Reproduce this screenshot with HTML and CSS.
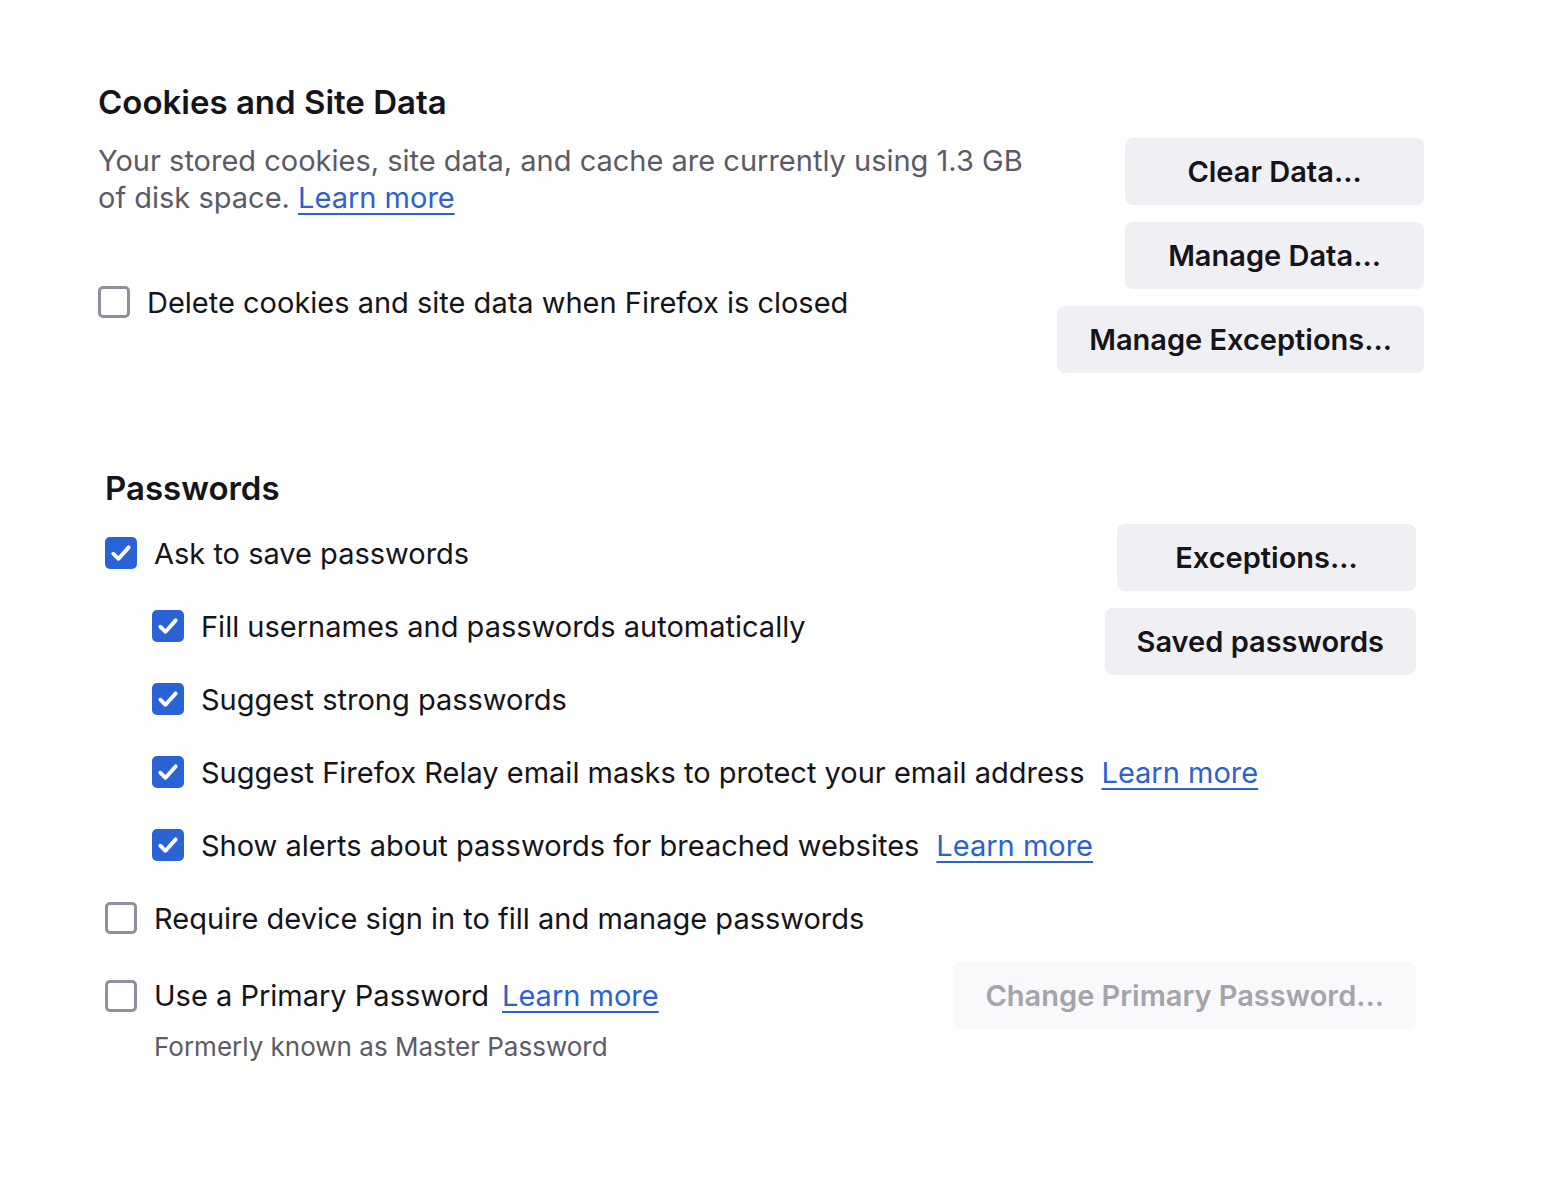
FILE: index.html
```html
<!DOCTYPE html>
<html lang="en">
<head>
<meta charset="utf-8">
<title>Privacy settings</title>
<link rel="stylesheet" href="styles.css">
</head>
<body>
<main class="page">
  <section class="cookies">
    <h2 class="heading">Cookies and Site Data</h2>
    <div class="cookies-body">
      <div class="cookies-left">
        <p class="desc"><span>Your stored cookies, site data, and cache are currently using 1.3 GB of disk space.</span> <a class="link" href="#">Learn more</a></p>
        <label class="check-row delete-row">
          <span class="box"></span>
          <span class="label">Delete cookies and site data when Firefox is closed</span>
        </label>
      </div>
      <div class="btn-col">
        <button class="btn">Clear Data…</button>
        <button class="btn">Manage Data…</button>
        <button class="btn">Manage Exceptions…</button>
      </div>
    </div>
  </section>

  <section class="passwords">
    <h2 class="heading">Passwords</h2>
    <div class="pw-body">
      <div class="pw-list">
        <label class="check-row">
          <span class="box checked"><svg viewBox="0 0 16 16"><path d="M3.6 8.4 L6.6 11.3 L12.4 4.8"/></svg></span>
          <span class="label">Ask to save passwords</span>
        </label>
        <label class="check-row indent">
          <span class="box checked"><svg viewBox="0 0 16 16"><path d="M3.6 8.4 L6.6 11.3 L12.4 4.8"/></svg></span>
          <span class="label">Fill usernames and passwords automatically</span>
        </label>
        <label class="check-row indent">
          <span class="box checked"><svg viewBox="0 0 16 16"><path d="M3.6 8.4 L6.6 11.3 L12.4 4.8"/></svg></span>
          <span class="label">Suggest strong passwords</span>
        </label>
        <label class="check-row indent">
          <span class="box checked"><svg viewBox="0 0 16 16"><path d="M3.6 8.4 L6.6 11.3 L12.4 4.8"/></svg></span>
          <span class="label">Suggest Firefox Relay email masks to protect your email address</span>
          <a class="link" href="#">Learn more</a>
        </label>
        <label class="check-row indent">
          <span class="box checked"><svg viewBox="0 0 16 16"><path d="M3.6 8.4 L6.6 11.3 L12.4 4.8"/></svg></span>
          <span class="label">Show alerts about passwords for breached websites</span>
          <a class="link" href="#">Learn more</a>
        </label>
        <label class="check-row">
          <span class="box"></span>
          <span class="label">Require device sign in to fill and manage passwords</span>
        </label>
      </div>
      <div class="btn-col">
        <button class="btn">Exceptions…</button>
        <button class="btn">Saved passwords</button>
      </div>
    </div>
    <div class="primary">
      <label class="check-row">
        <span class="box"></span>
        <span class="label">Use a Primary Password</span>
        <a class="link" href="#">Learn more</a>
      </label>
      <button class="btn disabled">Change Primary Password…</button>
      <p class="note">Formerly known as Master Password</p>
    </div>
  </section>
</main>
</body>
</html>
```

FILE: styles.css
```css
* { box-sizing: border-box; }

html, body {
  margin: 0;
  padding: 0;
  background: #ffffff;
}

body {
  font-family: Inter, "Noto Sans", "Liberation Sans", sans-serif;
  color: #15141a;
  font-size: 29px;
}

.page {
  width: 1424px;
  padding: 79px 0 0 98px;
}

.heading {
  margin: 0;
  font-size: 33px;
  font-weight: 600;
  line-height: 46px;
  letter-spacing: 0;
}

.cookies-body {
  display: grid;
  grid-template-columns: minmax(0, 1fr) auto;
  column-gap: 20px;
  margin-top: 13px;
}

.cookies-left {
  display: flex;
  flex-direction: column;
}

.desc {
  margin: 4px 0 0;
  max-width: 940px;
  color: #5b5b66;
  line-height: 37px;
}

.link {
  color: #2b62cf;
  text-decoration: underline;
  text-underline-offset: 5px;
  text-decoration-thickness: 2px;
}

.delete-row {
  margin-top: 66px;
}

.btn-col {
  display: flex;
  flex-direction: column;
  align-items: flex-end;
  gap: 17px;
}

.btn {
  height: 67px;
  min-width: 299px;
  padding: 0 32px;
  border: none;
  border-radius: 8px;
  background: #f0f0f4;
  color: #15141a;
  font-family: inherit;
  font-size: 29px;
  font-weight: 600;
  white-space: nowrap;
}

.btn.disabled {
  background: #f9f9fb;
  color: #a4a4ab;
}

.check-row {
  display: flex;
  align-items: center;
  height: 40px;
  white-space: nowrap;
}

.box {
  flex: none;
  width: 32px;
  height: 32px;
  border: 3px solid #8f8f9d;
  border-radius: 5px;
  margin-right: 17px;
  display: flex;
  align-items: center;
  justify-content: center;
}

.box.checked {
  border: none;
  background: #2a63d6;
}

.box svg {
  width: 28px;
  height: 28px;
}

.box svg path {
  fill: none;
  stroke: #ffffff;
  stroke-width: 2.2;
  stroke-linecap: round;
  stroke-linejoin: round;
}

.check-row .link {
  margin-left: 17px;
}

.passwords {
  margin: 92px 8px 0 7px;
}

.pw-body {
  display: grid;
  grid-template-columns: minmax(0, 1fr) auto;
  margin-top: 13px;
}

.pw-list {
  display: flex;
  flex-direction: column;
  gap: 33px;
  padding-top: 9px;
}

.indent {
  margin-left: 47px;
}

.primary {
  display: grid;
  grid-template-columns: minmax(0, 1fr) auto;
  align-items: center;
  margin-top: 24px;
}

.primary .check-row .link {
  margin-left: 13px;
}

.note {
  grid-column: 1 / 2;
  margin: 0 0 0 49px;
  color: #5b5b66;
  font-size: 26px;
  line-height: 36px;
}
```
